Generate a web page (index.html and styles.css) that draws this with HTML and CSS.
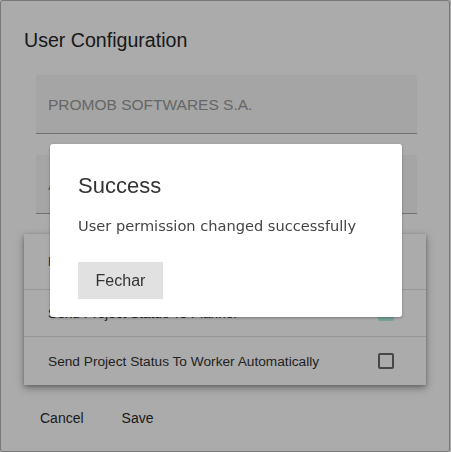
FILE: index.html
```html
<!DOCTYPE html>
<html>
<head>
<meta charset="utf-8">
<link rel="stylesheet" href="styles.css">
</head>
<body>
<div class="frame">
  <h1 class="title">User Configuration</h1>
  <div class="field"><span class="field-text">PROMOB SOFTWARES S.A.</span></div>
  <div class="field field-second"><span class="field-text">Administrator</span></div>
  <div class="card">
    <div class="row row-first"><span>Permissions</span></div>
    <div class="row"><span>Send Project Status To Planner</span><span class="check checked"></span></div>
    <div class="row"><span>Send Project Status To Worker Automatically</span><span class="check"></span></div>
  </div>
  <div class="actions">
    <button class="action">Cancel</button>
    <button class="action">Save</button>
  </div>
</div>
<div class="overlay"></div>
<div class="modal">
  <h2 class="modal-title">Success</h2>
  <p class="modal-text">User permission changed successfully</p>
  <button class="modal-btn">Fechar</button>
</div>
</body>
</html>
```

FILE: styles.css
```css
html, body {
  margin: 0;
  padding: 0;
  width: 451px;
  height: 452px;
  overflow: hidden;
  background: #ffffff;
  font-family: "Liberation Sans", Arial, sans-serif;
}
.frame {
  box-sizing: border-box;
  width: 450px;
  height: 452px;
  border: 1px solid #b4b4b4;
  border-radius: 3px;
  background: #fff;
  padding: 0 23px 0 23px;
  display: flex;
  flex-direction: column;
}
.title {
  margin: 26px 0 0 0;
  font-size: 19.6px;
  line-height: 26px;
  font-weight: normal;
  color: #262626;
}
.field {
  margin: 22px 9px 0 12px;
  height: 56px;
  background: #f6f6f6;
  border-bottom: 1px solid #a8a8a8;
  display: flex;
  align-items: center;
  padding: 2px 12px 0;
  box-sizing: content-box;
  border-radius: 2px 2px 0 0;
}
.field-second { margin-top: 21px; }
.field-text {
  font-size: 15.5px;
  color: #999;
}
.card {
  margin-top: 20px;
  background: #fff;
  box-shadow: 0 3px 8px rgba(0,0,0,0.35), 0 1px 3px rgba(0,0,0,0.2);
  display: flex;
  flex-direction: column;
}
.row {
  height: 46px;
  display: flex;
  align-items: center;
  justify-content: space-between;
  padding: 0 32px 0 24px;
  border-top: 1px solid #e0e0e0;
  font-size: 13.7px;
  color: #333;
}
.row-first { height: 55px; border-top: none; }
.row:last-child { height: 48px; }
.check {
  box-sizing: border-box;
  width: 16px;
  height: 16px;
  border: 2px solid #6a6a6a;
  border-radius: 2px;
}
.check.checked {
  background: #b3f3e8;
  border-color: #b3f3e8;
}
.actions {
  display: flex;
  gap: 6px;
  margin-top: 23px;
}
.action {
  background: none;
  border: none;
  padding: 0 16px;
  font-family: "Liberation Sans", Arial, sans-serif;
  font-size: 14px;
  line-height: 20px;
  color: #2a2a2a;
}
.overlay {
  position: fixed;
  inset: 0;
  background: rgba(0,0,0,0.33);
}
.modal {
  position: fixed;
  left: 50px;
  top: 144px;
  width: 352px;
  box-sizing: border-box;
  padding: 28px 28px 18px 28px;
  background: #fff;
  border-radius: 3px;
  box-shadow: 0 1px 3px rgba(0,0,0,0.3);
}
.modal-title {
  margin: 0;
  font-size: 22px;
  line-height: 28px;
  font-weight: normal;
  color: #333;
}
.modal-text {
  margin: 16px 0 0 0;
  font-family: "DejaVu Sans", Verdana, sans-serif;
  font-size: 14.6px;
  line-height: 20px;
  color: #444;
}
.modal-btn {
  margin-top: 26px;
  display: block;
  height: 37px;
  width: 85px;
  padding: 0;
  border: none;
  background: #e1e1e1;
  font-family: "Liberation Sans", Arial, sans-serif;
  font-size: 16px;
  line-height: 37px;
  color: #333;
}
```
